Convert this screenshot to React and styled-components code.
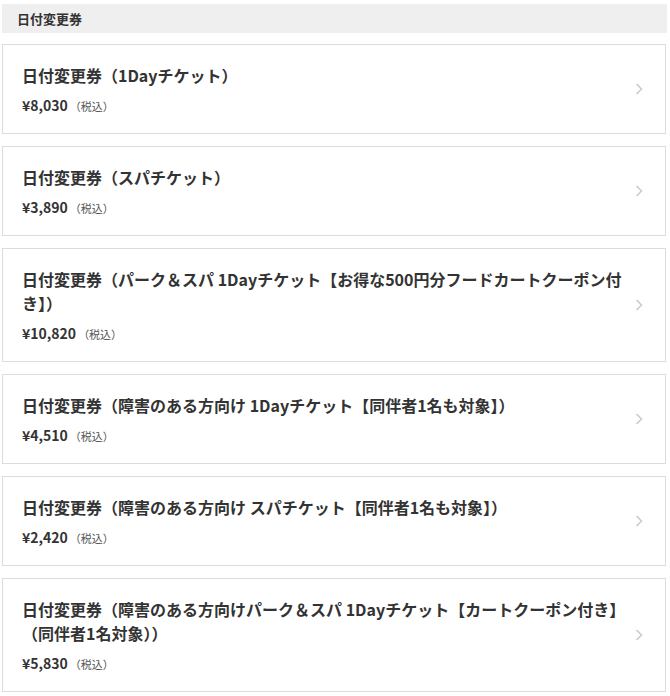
import styled, { createGlobalStyle } from 'styled-components';

const GlobalStyle = createGlobalStyle`
  body {
    margin: 0;
    background: #fff;
    font-family: 'Noto Sans CJK JP', 'Noto Sans', sans-serif;
    color: #333;
  }
`;

const Page = styled.div`
  padding: 4px 3px 0 2px;
  display: flex;
  flex-direction: column;
`;

const SectionHead = styled.h2`
  margin: 0 0 11px;
  height: 29px;
  display: flex;
  align-items: center;
  padding-left: 15px;
  background: #efefef;
  font-size: 13px;
  font-weight: 700;
  color: #333;
`;

const List = styled.div`
  display: flex;
  flex-direction: column;
  gap: 12px;
  margin-right: 1px;
`;

const Card = styled.a`
  display: flex;
  align-items: center;
  border: 1px solid #dcdcdc;
  background: #fff;
  padding: 18px 22px 17px 19px;
  text-decoration: none;
  color: inherit;
  cursor: pointer;
`;

const Body = styled.div`
  flex: 1;
  min-width: 0;
  display: flex;
  flex-direction: column;
  gap: 8px;
`;

const Title = styled.div`
  font-size: 16px;
  font-weight: 700;
  line-height: 24px;
  color: #333;
`;

const Price = styled.div`
  font-size: 14px;
  font-weight: 700;
  line-height: 20px;
  color: #333;
`;

const Tax = styled.span`
  font-size: 11px;
  font-weight: 400;
  color: #555;
  margin-left: 2px;
`;

const Chevron = styled.svg`
  flex: none;
  width: 8px;
  height: 12px;
  margin-left: 12px;
  margin-top: -2px;
`;

const tickets = [
  { title: '日付変更券（1Dayチケット）', price: '¥8,030' },
  { title: '日付変更券（スパチケット）', price: '¥3,890' },
  {
    title: '日付変更券（パーク＆スパ 1Dayチケット【お得な500円分フードカートクーポン付き】）',
    price: '¥10,820',
  },
  { title: '日付変更券（障害のある方向け 1Dayチケット【同伴者1名も対象】）', price: '¥4,510' },
  { title: '日付変更券（障害のある方向け スパチケット【同伴者1名も対象】）', price: '¥2,420' },
  {
    title: '日付変更券（障害のある方向けパーク＆スパ 1Dayチケット【カートクーポン付き】（同伴者1名対象））',
    price: '¥5,830',
  },
];

const App = () => (
  <Page>
    <GlobalStyle />
    <SectionHead>日付変更券</SectionHead>
    <List>
      {tickets.map((t) => (
        <Card key={t.title}>
          <Body>
            <Title>{t.title}</Title>
            <Price>
              {t.price}
              <Tax>（税込）</Tax>
            </Price>
          </Body>
          <Chevron viewBox="0 0 8 12">
            <path d="M1.5 1 L6.5 6 L1.5 11" fill="none" stroke="#c9ccd0" strokeWidth="1.6" />
          </Chevron>
        </Card>
      ))}
    </List>
  </Page>
);

export default App;
